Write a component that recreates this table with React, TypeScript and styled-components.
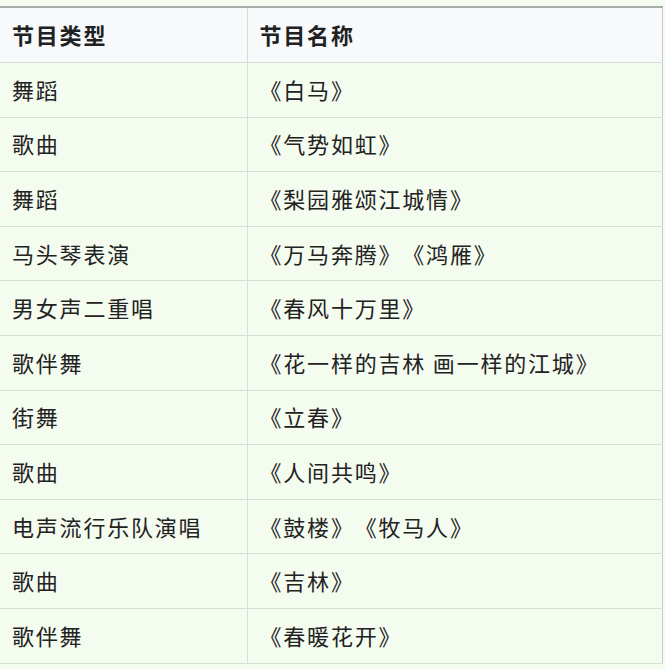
import styled, { createGlobalStyle } from "styled-components";

const GlobalStyle = createGlobalStyle`
  html, body {
    margin: 0;
    padding: 0;
    background: #f4fbef;
  }
  body {
    font-family: "Noto Sans CJK SC", "Noto Sans", sans-serif;
  }
`;

const Page = styled.div`
  padding-top: 6px;
  width: 665px;
`;

const Table = styled.table`
  width: 663px;
  border-collapse: collapse;
  border-top: 2px solid #a9aca9;
  table-layout: fixed;
`;

const HeadCell = styled.th`
  height: 52px;
  padding: 0 12px 2px;
  text-align: left;
  font-size: 22px;
  font-weight: 700;
  letter-spacing: 1.8px;
  text-spacing-trim: space-all;
  color: #202122;
  background: #f8f9fa;
  border: 1px solid #d8dbd8;
  border-left: none;
  &:last-child {
    border-right: 1px solid #c8cbc8;
  }
`;

const Cell = styled.td`
  height: 51.6px;
  padding: 0 12px 2px;
  font-size: 22px;
  letter-spacing: 1.8px;
  text-spacing-trim: space-all;
  color: #222;
  background: #f4fbef;
  border: 1px solid #d8dfd6;
  border-left: none;
  white-space: nowrap;
  &:last-child {
    border-right: 1px solid #c8cec6;
  }
`;

const rows: [string, string][] = [
  ["舞蹈", "《白马》"],
  ["歌曲", "《气势如虹》"],
  ["舞蹈", "《梨园雅颂江城情》"],
  ["马头琴表演", "《万马奔腾》《鸿雁》"],
  ["男女声二重唱", "《春风十万里》"],
  ["歌伴舞", "《花一样的吉林 画一样的江城》"],
  ["街舞", "《立春》"],
  ["歌曲", "《人间共鸣》"],
  ["电声流行乐队演唱", "《鼓楼》《牧马人》"],
  ["歌曲", "《吉林》"],
  ["歌伴舞", "《春暖花开》"],
];

export default function App() {
  return (
    <Page>
      <GlobalStyle />
      <Table>
        <colgroup>
          <col style={{ width: 247 }} />
          <col />
        </colgroup>
        <thead>
          <tr>
            <HeadCell>节目类型</HeadCell>
            <HeadCell>节目名称</HeadCell>
          </tr>
        </thead>
        <tbody>
          {rows.map(([type, name], i) => (
            <tr key={i}>
              <Cell>{type}</Cell>
              <Cell>{name}</Cell>
            </tr>
          ))}
        </tbody>
      </Table>
    </Page>
  );
}
